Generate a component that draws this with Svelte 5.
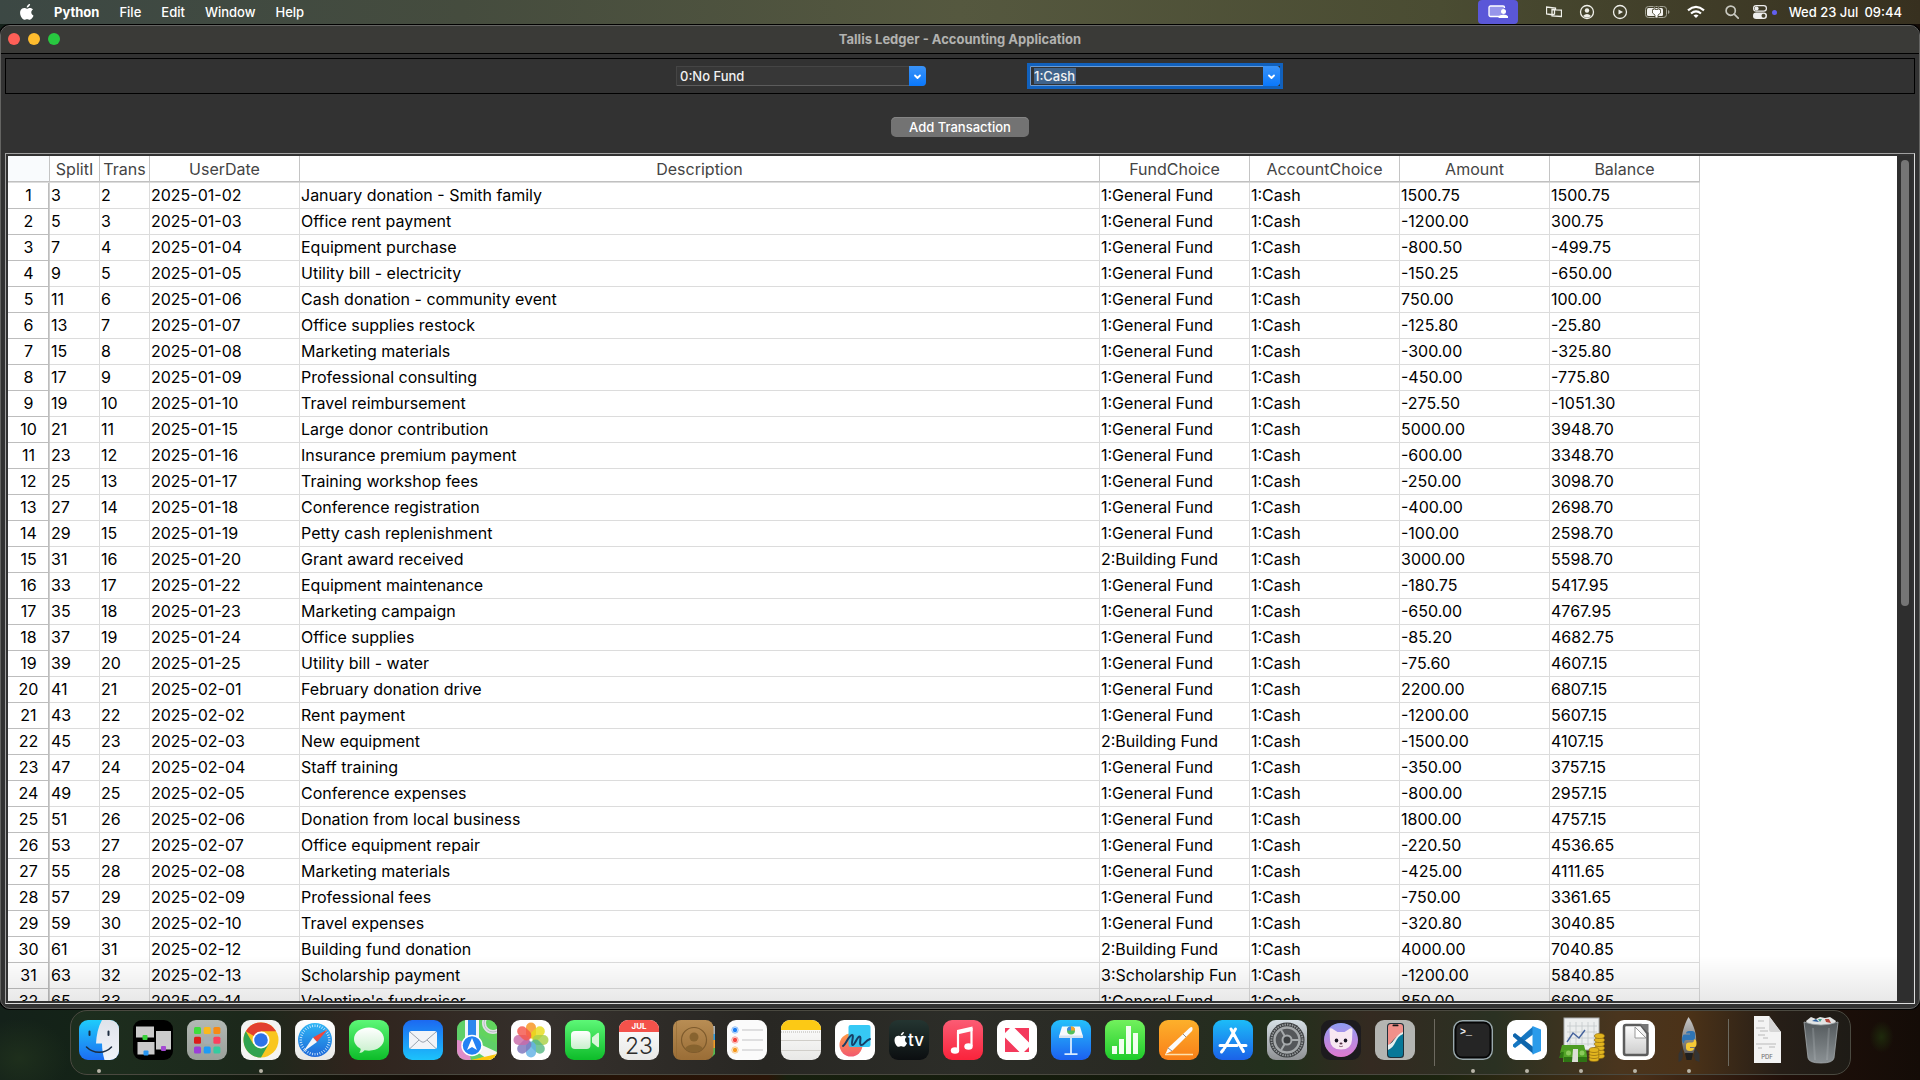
<script>
  const columns = [
    { label: 'SplitI', kind: 'narrow' },
    { label: 'Trans', kind: 'narrow' },
    { label: 'UserDate', kind: 'medium' },
    { label: 'Description', kind: 'wide' },
    { label: 'FundChoice', kind: 'medium' },
    { label: 'AccountChoice', kind: 'medium' },
    { label: 'Amount', kind: 'medium' },
    { label: 'Balance', kind: 'medium' }
  ];

  const G = '1:General Fund';
  const B = '2:Building Fund';
  const S = '3:Scholarship Fun';

  const entries = [
    ['2025-01-02', 'January donation - Smith family', G, '1500.75', '1500.75'],
    ['2025-01-03', 'Office rent payment', G, '-1200.00', '300.75'],
    ['2025-01-04', 'Equipment purchase', G, '-800.50', '-499.75'],
    ['2025-01-05', 'Utility bill - electricity', G, '-150.25', '-650.00'],
    ['2025-01-06', 'Cash donation - community event', G, '750.00', '100.00'],
    ['2025-01-07', 'Office supplies restock', G, '-125.80', '-25.80'],
    ['2025-01-08', 'Marketing materials', G, '-300.00', '-325.80'],
    ['2025-01-09', 'Professional consulting', G, '-450.00', '-775.80'],
    ['2025-01-10', 'Travel reimbursement', G, '-275.50', '-1051.30'],
    ['2025-01-15', 'Large donor contribution', G, '5000.00', '3948.70'],
    ['2025-01-16', 'Insurance premium payment', G, '-600.00', '3348.70'],
    ['2025-01-17', 'Training workshop fees', G, '-250.00', '3098.70'],
    ['2025-01-18', 'Conference registration', G, '-400.00', '2698.70'],
    ['2025-01-19', 'Petty cash replenishment', G, '-100.00', '2598.70'],
    ['2025-01-20', 'Grant award received', B, '3000.00', '5598.70'],
    ['2025-01-22', 'Equipment maintenance', G, '-180.75', '5417.95'],
    ['2025-01-23', 'Marketing campaign', G, '-650.00', '4767.95'],
    ['2025-01-24', 'Office supplies', G, '-85.20', '4682.75'],
    ['2025-01-25', 'Utility bill - water', G, '-75.60', '4607.15'],
    ['2025-02-01', 'February donation drive', G, '2200.00', '6807.15'],
    ['2025-02-02', 'Rent payment', G, '-1200.00', '5607.15'],
    ['2025-02-03', 'New equipment', B, '-1500.00', '4107.15'],
    ['2025-02-04', 'Staff training', G, '-350.00', '3757.15'],
    ['2025-02-05', 'Conference expenses', G, '-800.00', '2957.15'],
    ['2025-02-06', 'Donation from local business', G, '1800.00', '4757.15'],
    ['2025-02-07', 'Office equipment repair', G, '-220.50', '4536.65'],
    ['2025-02-08', 'Marketing materials', G, '-425.00', '4111.65'],
    ['2025-02-09', 'Professional fees', G, '-750.00', '3361.65'],
    ['2025-02-10', 'Travel expenses', G, '-320.80', '3040.85'],
    ['2025-02-12', 'Building fund donation', B, '4000.00', '7040.85'],
    ['2025-02-13', 'Scholarship payment', S, '-1200.00', '5840.85'],
    ['2025-02-14', "Valentine's fundraiser", G, '850.00', '6690.85']
  ];

  const rows = entries.map(([date, text, fund, amount, balance], i) => [
    String(3 + i * 2), String(2 + i), date, text, fund, '1:Cash', amount, balance
  ]);

  const dock = [
    { name: 'Finder', running: true }, { name: 'Mission Control' }, { name: 'Launchpad' },
    { name: 'Chrome', running: true }, { name: 'Safari' }, { name: 'Messages' }, { name: 'Mail' },
    { name: 'Maps' }, { name: 'Photos' }, { name: 'FaceTime' }, { name: 'Calendar' },
    { name: 'Contacts' }, { name: 'Reminders' }, { name: 'Notes' }, { name: 'Freeform' },
    { name: 'TV' }, { name: 'Music' }, { name: 'News' }, { name: 'Keynote' }, { name: 'Numbers' },
    { name: 'Pages' }, { name: 'App Store' }, { name: 'Settings' }, { name: 'Cat' },
    { name: 'iPhone Mirroring' }, { separator: true },
    { name: 'Terminal', running: true }, { name: 'Code', running: true },
    { name: 'Money', running: true }, { name: 'LibreOffice', running: true },
    { name: 'Python', running: true }, { separator: true },
    { name: 'Document' }, { name: 'Trash' }
  ];

  const fills = {
    'Mission Control': '#000', Launchpad: 'url(#silver)', Chrome: '#f4f4f3', Safari: 'url(#white)',
    Messages: 'url(#green)', Mail: 'url(#mail)', Maps: '#5fd068', Photos: '#fff',
    FaceTime: 'url(#green)', Calendar: 'url(#white)', Reminders: '#fbfbfb',
    Notes: 'url(#white)', Freeform: '#fff', TV: 'url(#tv)', Music: 'url(#music)', News: '#fff',
    Keynote: 'url(#keynote)', Numbers: 'url(#numbers)', Pages: 'url(#pages)',
    'App Store': 'url(#store)', Settings: 'url(#settings)', Cat: '#1d1b1e',
    'iPhone Mirroring': '#b4b5b2', Code: '#fff', LibreOffice: '#fff'
  };

  const tiles = ['#3fdc3c', '#fbb91c', '#f68a15', '#dc1b1b', '#a4adb2', '#fc3e5e', '#9b3fd8', '#1e9bf5', '#35cba0'];
  const petals = ['#f7941e', '#e8dc1a', '#a8cf45', '#58b884', '#62b1e4', '#7d74bc', '#c86aa8', '#f4564a'];
  const tickAngles = Array.from({ length: 36 }, (_, i) => i * 10);

  let fund = $state('0:No Fund');
  let account = $state('1:Cash');
</script>

{#snippet chevron()}
  <svg class="chevron" viewBox="0 0 17 20" aria-hidden="true">
    <path d="M6 9.500l2.500 2.500 2.500-2.500" fill="none" stroke="#fff" stroke-width="1.800" stroke-linecap="round" stroke-linejoin="round" />
  </svg>
{/snippet}

{#snippet art(name)}
  <svg class="app-icon" viewBox="0 0 40 40" aria-hidden="true">
    {#if fills[name]}<rect width="40" height="40" rx="9" fill={fills[name]} />{/if}
    {#if name === 'Finder'}
      <g clip-path="url(#tile)">
        <rect width="40" height="40" fill="url(#finder)" />
        <path d="M23 0C19 7 17.500 15 17 23.500h6C23 29 24 35 25.500 40H40V0z" fill="url(#face)" />
      </g>
      <path d="M10.500 11.500v3.500M29.500 11.500v3.500" stroke="#1c2c40" stroke-width="2" stroke-linecap="round" />
      <path d="M7.500 27c7 7 18.500 7 25 0" fill="none" stroke="#1c2c40" stroke-width="1.500" stroke-linecap="round" />
    {:else if name === 'Mission Control'}
      <path d="M3 6.500h18v11H3zM4.500 22h17v12.500h-17zM23 11h15v18.500H23z" fill="#cbcbcb" />
      <rect x="9.500" y="15" width="5" height="5" rx="1" fill="#38d13b" />
      <rect x="10.500" y="30.500" width="5" height="5" rx="1" fill="#2694f2" />
      <rect x="28" y="26" width="5" height="5" rx="1" fill="#a44ad2" />
    {:else if name === 'Launchpad'}
      {#each tiles as color, i}
        <rect x={7 + (i % 3) * 9.7} y={7 + Math.floor(i / 3) * 9.7} width="7" height="7" rx="1.500" fill={color} />
      {/each}
    {:else if name === 'Chrome'}
      <circle cx="20" cy="20" r="17.500" fill="#f9c61f" />
      <path d="M20 20 4.800 11.300A17.500 17.500 0 0 1 35.200 11.300H20z" fill="#e2402f" />
      <path d="M4.800 11.300A17.500 17.500 0 0 0 20 37.500l7.600-13.200L20 20l-7.600 4.300z" fill="#31a350" />
      <circle cx="20" cy="20" r="8.500" fill="#fff" /><circle cx="20" cy="20" r="6.800" fill="#2d73e8" />
    {:else if name === 'Safari'}
      <circle cx="20" cy="20" r="17" fill="url(#safari)" />
      {#each tickAngles as angle}
        <path d="M20 4.500v2.500" stroke="#d8efff" stroke-width=".8" transform="rotate({angle} 20 20)" />
      {/each}
      <path d="M32.500 9.500 18 17.500l4 4.500z" fill="#f2463a" /><path d="M8 32 18 17.500l4 4.500z" fill="#f3f6fa" />
    {:else if name === 'Messages'}
      <path d="M20 7.500c8.500 0 15 5 15 11.600s-6.500 11.600-15 11.600c-1.500 0-3-.2-4.400-.5-1.300 1.600-3 2.600-5.300 2.600 1-1.200 1.500-2.500 1.300-4C7.600 26.700 5 23.200 5 19.100 5 12.500 11.500 7.500 20 7.500z" fill="url(#bubble)" />
    {:else if name === 'Mail'}
      <rect x="6" y="11" width="28" height="18" rx="2.500" fill="#f1f4f8" />
      <path d="m7 12 11 9.500q2 1.500 4 0L33 12M7 28.500l9-8.500M33 28.500 24 20" fill="none" stroke="#9aa3ad" />
    {:else if name === 'Maps'}
      <g clip-path="url(#tile)">
        <path d="M22 0h18v24L22 14z" fill="#62d45e" />
        <circle cx="36" cy="3" r="9" fill="none" stroke="#e2e2e6" stroke-width="4" />
        <circle cx="36" cy="3" r="9" fill="none" stroke="#b9bcc4" />
        <path d="M0 20q10 0 14 20H0z" fill="#e08cc8" />
        <path d="M18 40 40 32v8z" fill="#fcc70c" /><path d="M14 20 40 32v8h-8L14 28z" fill="#f5f5f3" />
        <path d="M8 0h14v20H8z" fill="#f3f5f8" /><path d="M11 0h8v22h-8z" fill="#2b86ee" />
        <path d="M14 40h26v-6z" fill="#fcc70c" />
      </g>
      <circle cx="15" cy="25.500" r="10" fill="#2382f4" stroke="#fff" stroke-width="1.500" />
      <path d="m15 18 5 12-5-3-5 3z" fill="#fff" />
    {:else if name === 'Photos'}
      {#each petals as color, i}
        <rect x="15" y="2.500" width="10" height="16" rx="5" fill={color} opacity=".82" transform="rotate({i * 45} 20 20)" />
      {/each}
    {:else if name === 'FaceTime'}
      <rect x="6" y="11" width="19.500" height="18" rx="4" fill="url(#bubble)" />
      <path d="m27 17.500 5.500-4.500q1.500-1 1.500.8v12.400q0 1.800-1.500.8L27 22.500z" fill="#d8f6da" />
    {:else if name === 'Calendar'}
      <path d="M0 12V9a9 9 0 0 1 9-9h22a9 9 0 0 1 9 9v3z" fill="#f4524b" />
      <text x="20" y="9" class="month">JUL</text><text x="20" y="34" class="day">23</text>
    {:else if name === 'Contacts'}
      <path d="M39 6h3v8h-3z" fill="#a9b0b7" /><path d="M39 14h3v6h-3z" fill="#2b9fe6" />
      <path d="M39 20h3v8h-3z" fill="#f29d28" /><path d="M39 28h3v6l-3 3z" fill="#4fbf52" />
      <rect width="40.500" height="40" rx="8" fill="url(#leather)" />
      <path d="M3.500 1v38" stroke="#8d662f" opacity=".5" />
      <g fill="none" stroke="#7d5a2c" stroke-width="1.200"><circle cx="21" cy="20" r="12.500" /></g>
      <circle cx="21" cy="17" r="4.500" fill="#87632f" /><path d="M12 28.500a10 7 0 0 1 18 0 12.500 12.500 0 0 1-18 0z" fill="#87632f" />
    {:else if name === 'Reminders'}
      {#each ['#1b7ef5', '#f5443c', '#f79a1d'] as color, i}
        <circle cx="8" cy={10 + i * 10} r="3.200" fill="none" stroke={color} opacity=".5" />
        <circle cx="8" cy={10 + i * 10} r="2.200" fill={color} />
        <path d="M15 {10 + i * 10}h21" stroke="#cfcfd1" stroke-width="1.300" />
      {/each}
    {:else if name === 'Notes'}
      <path d="M0 10V9a9 9 0 0 1 9-9h22a9 9 0 0 1 9 9v1z" fill="#fcc915" />
      <path d="M0 12h40" stroke="#b5b3ae" stroke-dasharray="1 1" /><path d="M0 20.500h40M0 30.500h40" stroke="#d0cec9" />
    {:else if name === 'Freeform'}
      <circle cx="16" cy="25" r="11.500" fill="url(#coral)" />
      <rect x="13.500" y="5" width="22" height="22" rx="2" fill="#25c4f4" opacity=".92" />
      <path d="M8 26c2.500-1 6-11 9-11 2.500 0-1.500 9.500.5 10 2.500.5 4.500-8.500 7-8.500 2.500 0-1 8 1.500 8.500 3 .500 4-4.500 9-6" fill="none" stroke="#173e66" stroke-width="2" stroke-linecap="round" />
    {:else if name === 'TV'}
      <svg x="5" y="12" width="14" height="15" viewBox="0 0 14 16"><use href="#apple" fill="#fff" /></svg>
      <text x="19" y="26" class="tv">tv</text>
    {:else if name === 'Music'}
      <path d="m14 10 15.500-3.500v4.500L14 14.500z" fill="#fff" />
      <path d="M15 12v18M28.500 8v18" stroke="#fff" stroke-width="2.200" />
      <ellipse cx="12" cy="30.500" rx="4.200" ry="3.300" fill="#fff" /><ellipse cx="25.500" cy="26.500" rx="4.200" ry="3.300" fill="#fff" />
    {:else if name === 'News'}
      <path d="M17.500 8H32v14.500zM8 17.500V32h14.500z" fill="#f4395c" />
      <path d="M8 8h4l20 20v4h-4L8 12z" fill="#fff" />
      <path d="M8 8h5l-5 5zM32 32h-5l5-5z" fill="#f4395c" />
    {:else if name === 'Keynote'}
      <path d="M11 6.500h18l3 10H8z" fill="#f6f9fc" /><rect x="8" y="15.500" width="24" height="2.500" fill="#d4e1ef" />
      <circle cx="20" cy="10.500" r="4" fill="#52bf5a" /><path d="M20 10.500V6.500a4 4 0 0 1 4 4z" fill="#f6a22a" /><path d="M20 10.500h-4a4 4 0 0 1 4-4z" fill="#3b87ea" />
      <path d="M20 18v15.500M13.500 34.200h13" stroke="#d9ebff" stroke-width="1.800" />
    {:else if name === 'Numbers'}
      <path d="M7 26h5v8H7zM14 19h5v15h-5zM21 6h5v28h-5zM28 13h5v21h-5z" fill="#f1ffef" />
    {:else if name === 'Pages'}
      <path d="M6 34.500h28" stroke="#fde0ad" stroke-width="1.500" />
      <path d="M30 8.500q3-2.500 3.500-.5t-1 3.500L13 31l-6.500 3L9 28z" fill="#fbfbfb" /><path d="M9 28l4 3M24 14l3 3" stroke="#8e8e8e" />
    {:else if name === 'App Store'}
      <path d="M22.500 9 11.500 28M18 9l11 20M7 25.500h17M27.500 25.500H33M10.500 29.500 8.500 32M29.500 29.500l1 2" stroke="#fff" stroke-width="3" stroke-linecap="round" fill="none" />
    {:else if name === 'Settings'}
      <circle cx="20" cy="20" r="17.500" fill="#3b3e40" /><circle cx="20" cy="20" r="15.500" fill="none" stroke="#94989a" stroke-width="2" stroke-dasharray="1.500 1" />
      <circle cx="20" cy="20" r="12.500" fill="#54575a" stroke="#a5a9ab" stroke-width="2.500" />
      <circle cx="20" cy="20" r="4.500" fill="#3b3e40" stroke="#a5a9ab" stroke-width="2" />
      <path d="M24.500 20H32M17.700 16.100 14 9.700M17.700 23.900 14 30.300" stroke="#a5a9ab" stroke-width="2" />
    {:else if name === 'Cat'}
      <circle cx="20" cy="20" r="17" fill="url(#halo)" />
      <path d="M9 20 8.500 9.500q.500-2 2.500-1l5.500 3.500h7L29 8.500q2-1 2.500 1L31 20q-.5 9.500-11 9.500T9 20z" fill="#f8e8f2" />
      <ellipse cx="15.500" cy="20.500" rx="1.800" ry="2" fill="#1b1524" /><ellipse cx="24.500" cy="20.500" rx="1.800" ry="2" fill="#1b1524" />
      <ellipse cx="20" cy="23.500" rx="1.500" ry="1" fill="#523045" /><path d="M18 26q2 1.500 4 0" fill="none" stroke="#7e5168" stroke-width=".8" />
    {:else if name === 'iPhone Mirroring'}
      <rect x="12" y="3" width="17" height="35" rx="3.500" fill="#20303a" />
      <path d="M13 7a3 3 0 0 1 3-3h9a3 3 0 0 1 3 3v7C20 16 17 22 13 26z" fill="#f0908a" />
      <path d="M28 14v20a3 3 0 0 1-3 3h-9a3 3 0 0 1-3-3v-4c7-3 6-14 15-16z" fill="#087898" />
      <path d="M13 30v-5c7-3 7-10 15-13v2c-8 3-7 13-15 16z" fill="#e5eeee" /><rect x="17.500" y="4.500" width="6" height="1.800" rx=".9" fill="#161616" />
    {:else if name === 'Terminal'}
      <rect x=".7" y=".7" width="38.600" height="38.600" rx="9" fill="#060606" stroke="#9aa9ad" stroke-width="1.400" />
      <rect x="3.500" y="3.500" width="33" height="33" rx="5.500" fill="#252525" /><text x="7" y="14.500" class="prompt">&gt;_</text>
    {:else if name === 'Code'}
      <path d="M26 6.500 6 24.500v2l2 1.500 18-13.500z" fill="#1577c2" /><path d="M6 14.500l2-1.500 19 14.500v7L6 16.500z" fill="#0e65ac" />
      <path d="M25.500 6 34 9.500v21.500l-8.500 3.500z" fill="#2a9bea" />
    {:else if name === 'Money'}
      <rect x="3" y="-2" width="35" height="32" fill="#eceeee" stroke="#a9acad" />
      <path d="M9 2v24M15 2v24M21 2v24M27 2v24M33 2v24M6 6h30M6 12h30M6 18h30M6 24h30" stroke="#c4c8ca" stroke-width=".8" />
      <path d="m6 22 6-9 6 5 6-8" fill="none" stroke="#44629c" stroke-width="1.400" />
      <path d="M1 25h22l2 8H-1z" fill="#4d9c22" /><path d="M0 32h24v6H-2z" fill="#2f7914" /><path d="M3 30h22l1 6v6H2z" fill="#53a528" /><path d="M3 37h23v5H3z" fill="#2e7314" />
      <path d="M12 29h5v13h-6z" fill="#dcded6" /><circle cx="7.500" cy="33" r="2.500" fill="#8bca5c" /><circle cx="21" cy="33" r="2.500" fill="#8bca5c" />
      <g fill="#e2b51e" stroke="#8e6910" stroke-width=".7">
        {#each [36, 32, 28, 24, 20, 16] as y}<ellipse cx="38.500" cy={y} rx="5" ry="2.500" />{/each}
        {#each [39, 36, 33, 30] as y}<ellipse cx="33" cy={y} rx="5" ry="2.500" />{/each}
      </g>
    {:else if name === 'LibreOffice'}
      <path d="M9 7a2 2 0 0 1 2-2h15l6.500 8.500V33a2 2 0 0 1-2 2H11a2 2 0 0 1-2-2z" fill="url(#page)" stroke="#5c5c5c" stroke-width="2.500" />
      <path d="M20 7v11h11z" fill="#fff" stroke="#999" /><path d="M25 4h8.500v9.500z" fill="#777" />
    {:else if name === 'Python'}
      <path d="M13 28 9.500 34v8l3-1.500L14 36zM26 28l4.500 6v8l-4-1.500L25 36z" fill="#343434" />
      <path d="M19.500-3C25 5 28 15 27 23q-1 7-3 11h-8q-2-4-3-11c-1-8 2-18 6.500-26z" fill="url(#metal)" /><path d="M16 33h8l-1.500 7h-5z" fill="#1f1f1f" />
      <path d="M20 11h3q3 0 3 3v4q0 2-2.500 2h-6q-2.500 0-2.500 3h-1q-2-4 0-7.500 0-1 2-1h5v-1h-4q0-2.500 3-2.500z" fill="#2f75b5" />
      <path d="M24 19.500h1.500q2 0 2 4T25 27h-4v1h4q0 3-4 3t-4-3v-3q0-2.500 3-2.500h3q2 0 2-3z" fill="#f7ca35" />
    {:else if name === 'Document'}
      <path d="M7-4h15l12 16v31H7z" fill="#f3f3f3" /><path d="M22-4v14q0 2 2 2h10z" fill="#d6d6d6" />
      <path d="M11 1h6M9 8h9M13 11h8M11 15h7M16 18h5M9 24h20M11 28h4M22 27h6" stroke="#b9b9b9" /><text x="20" y="39" class="pdf">PDF</text>
    {:else if name === 'Trash'}
      <path d="m5 1 5-4 5 2 4-2 5 1 5-1 6 4-2 4H7z" fill="#e2e4e4" /><path d="m11 1 4-2 3 3z" fill="#2d5e9d" /><path d="m24-1 4 0 2 4-5-1z" fill="#b5473b" /><path d="m17-1 4 0-2 3z" fill="#3da08c" />
      <path d="M3 2q17 6 34 0l-4 36q-1 5-13 5T7 38z" fill="url(#bin)" stroke="#a1a7aa" stroke-width=".8" />
      <path d="M12 8 14 40M28 8l-2 32" stroke="#b9bfc2" opacity=".25" stroke-width="2" />
    {/if}
  </svg>
{/snippet}

<svg class="defs" aria-hidden="true">
  <defs>
    <clipPath id="tile"><rect width="40" height="40" rx="9" /></clipPath>
    {#each [
      ['silver', '#b3b9b4', '#9aa09a'], ['white', '#ffffff', '#e8e8e6'], ['green', '#5df777', '#0dbc29'],
      ['mail', '#1c69f1', '#1cc3fb'], ['finder', '#1fccfb', '#1c6df2'], ['face', '#dfe3ea', '#f1f4fa'],
      ['tv', '#243531', '#0b0e10'], ['music', '#fb5c74', '#fa233b'], ['keynote', '#25c0fb', '#1c60f0'],
      ['numbers', '#72f15d', '#1ecb2a'], ['pages', '#fdb02b', '#f97f18'], ['store', '#1cbcf8', '#1b62e8'],
      ['settings', '#d6e0e6', '#8f9194'], ['safari', '#2fb6f5', '#1d67d8'], ['bubble', '#ffffff', '#c9f0cd'],
      ['leather', '#b88d54', '#9a6d36'], ['coral', '#ff9b46', '#f25a70'], ['page', '#ffffff', '#cccccc'],
      ['metal', '#c9c9c9', '#5e5e5e'], ['bin', '#53595c', '#8b9194'], ['halo', '#8f9cf2', '#e07ad0']
    ] as [id, from, to]}
      <linearGradient {id} x2="0" y2="1"><stop stop-color={from} /><stop offset="1" stop-color={to} /></linearGradient>
    {/each}
    <path id="apple" d="M9.400 2.500C10.100 1.700 10.500.7 10.400 0 9.500 0 8.500.6 7.900 1.300 7.300 2 6.800 2.900 6.900 3.800c1 .1 1.900-.5 2.500-1.300zM10.300 4.200c-1.400-.1-2.500.8-3.200.8-.7 0-1.700-.7-2.800-.7C2.800 4.300 1.500 5.100.8 6.400c-1.500 2.600-.4 6.400 1 8.500.7 1 1.500 2.100 2.700 2.100 1.100 0 1.500-.7 2.800-.7s1.600.7 2.800.7c1.100 0 1.900-1 2.600-2.100.8-1.200 1.100-2.300 1.200-2.400-.1 0-2.300-.9-2.300-3.500 0-2.100 1.700-3.200 1.800-3.200-1-1.500-2.500-1.600-3.100-1.600z" transform="scale(.97 .93)" />
  </defs>
</svg>

<div class="desktop">
  <header class="menubar">
    <nav class="menus" aria-label="Application menu">
      <button class="logo" aria-label="Apple menu"><svg viewBox="0 0 14 16"><use href="#apple" fill="#fff" /></svg></button>
      <button class="app-name">Python</button>
      <button>File</button>
      <button>Edit</button>
      <button>Window</button>
      <button>Help</button>
    </nav>
    <div class="status">
      <button class="sharing" aria-label="Screen sharing">
        <svg width="20" height="14" viewBox="0 0 20 14"><path d="M12 11.500H2.500A1.500 1.500 0 0 1 1 10V2.500A1.500 1.500 0 0 1 2.500 1H15a1.500 1.500 0 0 1 1.500 1.500V3" fill="#9795ea" stroke="#fff" stroke-width="1.300" /><circle cx="15.500" cy="6.500" r="2.500" fill="#fff" /><path d="M10.500 13q0-3.500 5-3.500t5 3.500z" fill="#fff" /></svg>
      </button>
      <svg width="16" height="14" viewBox="0 0 16 14" class="line"><path d="M8.500 9.500H4.500l-4-.500V2l9 1v2M6 4.500l9.500.500v6.500L6 11z" /><path d="M8.500 4.500v5" /></svg>
      <svg width="16" height="16" viewBox="0 0 16 16" class="line"><circle cx="8" cy="8" r="6.500" /><circle cx="8" cy="6.500" r="2.200" class="solid" /><path d="M4 12q4-4 8 0-4 3-8 0z" class="solid" /></svg>
      <svg width="16" height="16" viewBox="0 0 16 16" class="line"><circle cx="8" cy="8" r="6.500" /><path d="M6.500 5.500v5L11 8z" class="solid" /></svg>
      <svg width="25" height="14" viewBox="0 0 25 14"><rect x=".5" y="1.500" width="21" height="11" rx="3" fill="none" stroke="#a5a598" /><path d="M23 5v4q1.500-.5 1.500-2T23 5z" fill="#a5a598" /><rect x="2" y="3" width="16" height="8" rx="1.500" fill="#f2f2ee" /><path d="M9 1v3.500H7.500V8L10 10v3h3v-3l2.500-2V4.500H14V1h-1v3.500h-3V1z" fill="#fff" stroke="#46452f" stroke-width=".8" /></svg>
      <svg width="18" height="14" viewBox="0 0 18 14" fill="none" stroke="#fff" stroke-width="2.200"><path d="M1 5.300q8-6.800 16 0M4 8.500q5-4.200 10 0" /><path d="M9 13 6.500 10.500q2.500-2 5 0z" fill="#fff" stroke="none" /></svg>
      <div class="controls">
        <svg width="14" height="14" viewBox="0 0 14 14" fill="none" stroke="#c9c9c0" stroke-width="1.700"><circle cx="5.700" cy="5.700" r="4.600" /><path d="m9.200 9.200 4 4" stroke-linecap="round" /></svg>
        <svg width="14" height="14" viewBox="0 0 14 14"><rect x=".6" y=".6" width="12.800" height="5.500" rx="2.700" fill="none" stroke="#eee" stroke-width="1.200" /><circle cx="3.600" cy="3.400" r="2" fill="#eee" /><rect y="7.500" width="14" height="6.500" rx="3.200" fill="#eee" /><circle cx="10.500" cy="10.700" r="2" fill="#47442f" /></svg>
        <span class="indicator"></span>
      </div>
      <time class="clock"><span>Wed 23 Jul</span><span>09:44</span></time>
    </div>
  </header>

  <main class="window">
    <div class="titlebar">
      <div class="lights">
        <button class="close" aria-label="Close"></button>
        <button class="minimise" aria-label="Minimise"></button>
        <button class="zoom" aria-label="Zoom"></button>
      </div>
      <h1>Tallis Ledger - Accounting Application</h1>
      <span></span>
    </div>

    <div class="content">
      <form class="filters">
        <label class="combo">
          <select aria-label="Fund" bind:value={fund}>
            <option>0:No Fund</option><option>1:General Fund</option><option>2:Building Fund</option>
          </select>
          {@render chevron()}
        </label>
        <label class="combo active">
          <select aria-label="Account" bind:value={account}>
            <option>1:Cash</option>
          </select>
          {@render chevron()}
        </label>
      </form>

      <div class="actions"><button class="add">Add Transaction</button></div>

      <section class="frame">
        <div class="sheet">
          <table>
            <colgroup>
              <col class="index" />
              {#each columns as column}<col class={column.kind} />{/each}
            </colgroup>
            <thead>
              <tr>
                <td class="corner"></td>
                {#each columns as column}<th scope="col">{column.label}</th>{/each}
              </tr>
            </thead>
            <tbody>
              {#each rows as row, i}
                <tr>
                  <th scope="row">{i + 1}</th>
                  {#each row as cell}<td>{cell}</td>{/each}
                </tr>
              {/each}
            </tbody>
          </table>
        </div>
        <div class="scrollbar"><div class="thumb"></div></div>
      </section>
    </div>
  </main>

  <footer class="dock-area">
    <nav class="dock" aria-label="Dock">
      {#each dock as item}
        {#if item.separator}
          <span class="separator"></span>
        {:else}
          <button class="app" class:running={item.running} aria-label={item.name}>{@render art(item.name)}</button>
        {/if}
      {/each}
    </nav>
  </footer>
</div>

<style>
  :global(body) {
    margin: 0;
    background: #0e0c08;
  }

  .desktop {
    height: 100vh;
    display: flex;
    flex-direction: column;
    overflow: hidden;
    box-sizing: border-box;
    font-family: Inter, "Liberation Sans", sans-serif;
    font-size: 13px;
    background:
      radial-gradient(ellipse 50px 40px at 1% 98%, #1e2f1c, transparent),
      radial-gradient(ellipse 12px 16px at 98% 96%, #1e2a0c, transparent),
      linear-gradient(90deg, #14211a 0, #142416 6%, #150e08 22%, #251307 32%, #2a1508 40%, #17200f 41%, #141a0c 60%, #1c2410 75%, #4a3019 85%, #20100a 93%, #140c07 100%);
  }

  button {
    margin: 0;
    padding: 0;
    border: 0;
    background: none;
    color: inherit;
    font: inherit;
  }

  .defs {
    position: absolute;
    width: 0;
    height: 0;
  }

  .menubar {
    flex: none;
    height: 24px;
    display: flex;
    justify-content: space-between;
    padding: 0 18px 0 20px;
    color: #fff;
    font-weight: 500;
    background: linear-gradient(90deg, #3c4844 0, #454c3e 24%, #55583f 50%, #4a4c32 75%, #37301f 100%);
  }

  .menus,
  .status,
  .controls,
  .clock,
  .lights {
    display: flex;
    align-items: center;
  }

  .menus {
    gap: 20px;
  }

  .logo svg {
    display: block;
    width: 14px;
    height: 16px;
  }

  .app-name {
    font-weight: 700;
  }

  .status {
    gap: 17px;
  }

  .sharing {
    width: 40px;
    height: 24px;
    margin-right: 11px;
    display: grid;
    place-items: center;
    border-radius: 4px;
    background: #5a57d8;
  }

  .line {
    fill: none;
    stroke: #f0f0ea;
    stroke-width: 1.3;
  }

  .solid {
    fill: #f0f0ea;
    stroke: none;
  }

  .controls {
    gap: 14px;
    padding-left: 3px;
  }

  .indicator {
    width: 5px;
    height: 5px;
    margin-left: -9px;
    border-radius: 50%;
    background: #625ff0;
  }

  .clock {
    gap: 6px;
    margin-left: -5px;
  }

  .window {
    flex: 1;
    min-height: 0;
    display: flex;
    flex-direction: column;
    border: 1px solid #646462;
    border-radius: 10px;
    background: #323232;
    box-shadow: 0 0 0 1px #000;
    margin-top: 1px;
    overflow: hidden;
  }

  .titlebar {
    flex: none;
    display: grid;
    grid-template-columns: 1fr auto 1fr;
    align-items: center;
    height: 26px;
    padding: 0 7px 1px;
    border-bottom: 1px solid #000;
    background: #3a3a37;
  }

  .lights {
    gap: 8px;
  }

  .lights button {
    width: 12px;
    height: 12px;
    border-radius: 50%;
  }

  .close {
    background: #ff5f57;
  }

  .minimise {
    background: #febc2e;
  }

  .zoom {
    background: #28c840;
  }

  h1 {
    margin: 0;
    font-size: 13px;
    line-height: 14px;
    font-weight: 700;
    color: #b2b2b0;
  }

  .content {
    flex: 1;
    min-height: 0;
    display: flex;
    flex-direction: column;
    padding: 4px;
  }

  .filters {
    flex: none;
    display: flex;
    align-items: center;
    justify-content: center;
    gap: 104px;
    height: 34px;
    padding-left: 36px;
    border: 1px solid #000;
  }

  .combo {
    display: grid;
    grid-template-columns: 1fr 17px;
    width: 250px;
    height: 20px;
  }

  .combo select {
    grid-area: 1 / 1 / 2 / 3;
    appearance: none;
    width: 100%;
    height: 20px;
    margin: 0;
    padding: 0 20px 0 3px;
    border: 1px solid #454545;
    border-bottom-color: #5c5c5c;
    border-radius: 0 4px 4px 0;
    outline: none;
    background: #373737;
    color: #f1f1f1;
    font: inherit;
    font-weight: 500;
  }

  .chevron {
    grid-area: 1 / 2;
    width: 17px;
    height: 20px;
    border-radius: 0 4px 4px 0;
    background: linear-gradient(#3a93f8, #0a78fc);
    pointer-events: none;
  }

  .combo.active {
    box-shadow: 0 0 0 3px #1161bd;
  }

  .combo.active select {
    border-color: #6e9bd0;
    background: linear-gradient(#3f638b, #3f638b) 3px 1px / 42px 16px no-repeat #323232;
  }

  .actions {
    flex: none;
    display: flex;
    justify-content: center;
    padding: 23px 0 16px;
  }

  .add {
    width: 138px;
    height: 20px;
    border-radius: 5px;
    background: #737373;
    box-shadow: inset 0 1px #858585;
    color: #fff;
    line-height: 18px;
    font-weight: 500;
  }

  .frame {
    flex: 1;
    min-height: 0;
    display: flex;
    padding: 2px;
    border: 1px solid #a0a0a0;
    border-right-color: #dcdcdc;
    border-bottom-color: #dcdcdc;
  }

  .sheet {
    flex: 1;
    min-width: 0;
    position: relative;
    overflow: hidden;
    background: #fff;
  }

  .sheet::after {
    content: "";
    position: absolute;
    inset: auto 0 0 0;
    height: 45px;
    background: linear-gradient(transparent, rgba(0, 0, 0, 0.09));
    pointer-events: none;
  }

  .scrollbar {
    width: 8px;
    padding: 4px 3px 0 4px;
    background: #2e2e2e;
  }

  .thumb {
    height: 53%;
    border-radius: 4px;
    background: #757575;
  }

  table {
    table-layout: fixed;
    width: 1692px;
    border-collapse: separate;
    border-spacing: 0;
    font-size: 16px;
    line-height: 25px;
    color: #000;
  }

  .index {
    width: 42px;
  }

  .narrow {
    width: 50px;
  }

  .medium {
    width: 150px;
  }

  .wide {
    width: 800px;
  }

  th,
  td {
    padding: 0;
    white-space: nowrap;
    overflow: hidden;
    border-right: 1px solid #dcdcdc;
    border-bottom: 1px solid #dcdcdc;
  }

  td {
    padding-left: 1px;
    text-align: left;
  }

  th {
    font-weight: 400;
    text-align: center;
  }

  thead th,
  .corner {
    height: 26px;
    color: #444;
    border-right-color: #c4c4c4;
    box-shadow: inset 0 -1px #c0c0c0;
  }

  .corner {
    background: #f9fbfd;
  }

  tbody th {
    border-right-color: #d0d0d0;
    border-bottom-color: #bdbdbd;
    box-shadow: inset -1px 0 #bdbdbd;
  }

  .dock-area {
    flex: none;
    display: flex;
    justify-content: center;
    padding: 1px 0 5px;
  }

  .dock {
    display: flex;
    height: 63px;
    padding: 0 2px 0 1px;
    border: 1px solid #4a4940;
    border-radius: 17px;
    background: linear-gradient(90deg, #1d2e1e 0, #1c281b 10%, #30241d 16%, #35302c 27%, #282723 39%, #2c2d28 50%, #292a23 60%, #22301c 68%, #342a21 73%, #2a3122 80%, #4a351e 87%, #4b3218 91%, #261e17 96%, #1e1b16 100%);
  }

  .app {
    width: 54px;
    display: flex;
    flex-direction: column;
    align-items: center;
    gap: 9px;
    padding-top: 9px;
  }

  .app-icon {
    display: block;
    width: 40px;
    height: 40px;
    overflow: visible;
  }

  .running::after {
    content: "";
    width: 4px;
    height: 4px;
    border-radius: 50%;
    background: #b9b5a8;
  }

  .separator {
    width: 1px;
    margin: 8px 11px 8px 12px;
    background: #6d6a60;
  }

  .month,
  .day,
  .pdf {
    text-anchor: middle;
  }

  .month {
    font-size: 8px;
    font-weight: 700;
    fill: #fff;
  }

  .day {
    font-size: 23px;
    font-weight: 300;
    fill: #2c2c2c;
  }

  .tv {
    font-size: 17px;
    font-weight: 500;
    fill: #fff;
  }

  .prompt {
    font-family: "Liberation Mono", monospace;
    font-size: 10px;
    font-weight: 700;
    fill: #eee;
  }

  .pdf {
    font-size: 6px;
    font-weight: 500;
    fill: #777;
  }
</style>
